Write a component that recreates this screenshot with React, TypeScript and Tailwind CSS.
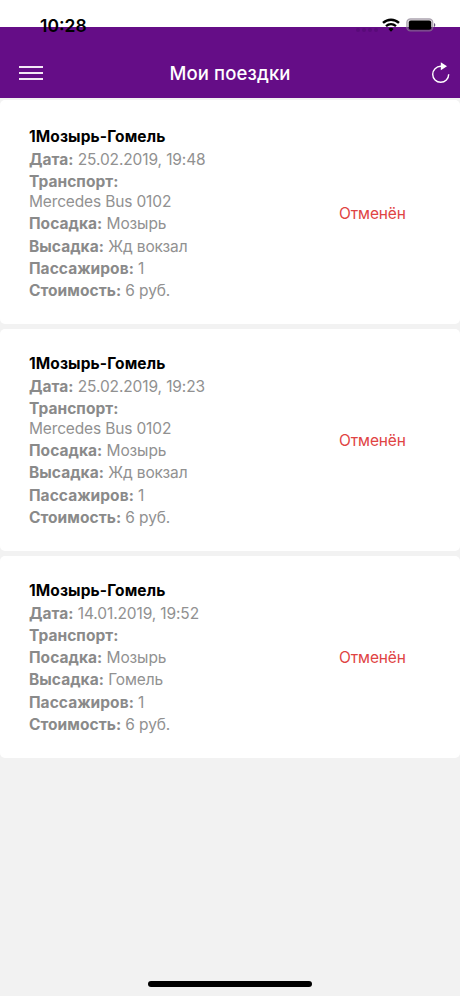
type Trip = {
  date: string;
  bus?: string;
  to: string;
};

const trips: Trip[] = [
  { date: '25.02.2019, 19:48', bus: 'Mercedes Bus 0102', to: 'Жд вокзал' },
  { date: '25.02.2019, 19:23', bus: 'Mercedes Bus 0102', to: 'Жд вокзал' },
  { date: '14.01.2019, 19:52', to: 'Гомель' },
];

function StatusBar() {
  return (
    <div className="absolute inset-x-0 top-0 z-10 h-[44px] text-black">
      <span className="absolute left-[40px] top-[15px] text-[17.5px] leading-[21px] font-semibold">10:28</span>
      <div className="absolute left-[356px] top-[28px] flex gap-[2px]">
        <i className="size-[4px] rounded-full bg-[#590b79]" />
        <i className="size-[4px] rounded-full bg-[#590b79]" />
        <i className="size-[4px] rounded-full bg-[#590b79]" />
        <i className="size-[4px] rounded-full bg-[#590b79]" />
      </div>
      <svg className="absolute left-[382px] top-[18px]" width="18" height="14" viewBox="0 0 18 14" fill="none" stroke="currentColor">
        <path d="M1 4.9C5.6.6 12.4.6 17 4.9" strokeWidth="2.4" />
        <path d="M4 8.2C7 5.5 11 5.5 14 8.2" strokeWidth="2.3" />
        <path d="M6.4 10.9C8 9.5 10 9.5 11.6 10.9L9 13.7Z" fill="currentColor" stroke="none" />
      </svg>
      <svg className="absolute left-[406px] top-[18px]" width="30" height="14" viewBox="0 0 30 14">
        <rect x="0.8" y="0.8" width="26" height="12.2" rx="3.6" fill="#8b8090" fillOpacity="0.35" stroke="#8b8090" strokeOpacity="0.65" strokeWidth="1.2" />
        <rect x="2.8" y="2.6" width="22.4" height="9.2" rx="2" fill="#000" />
        <path d="M28 5Q29.3 5.5 29.3 7T28 9Z" fill="#66507a" />
      </svg>
    </div>
  );
}

function Field({ label, children }: { label: string; children?: string }) {
  return (
    <p className="h-[22.2px] leading-[22.2px]">
      <b className="font-bold tracking-[0.04px] text-[#8a8a8a]">{label}:</b> {children}
    </p>
  );
}

function TripCard({ trip }: { trip: Trip }) {
  return (
    <article className="flex items-center rounded-[5px] bg-white pt-[23px] pb-[21.8px] pl-[29px] text-[15.5px] tracking-[-0.12px] text-[#919191] first:pt-[25px]">
      <div className="w-[310px]">
        <h2 className="h-[24px] leading-[24px] font-bold tracking-[0.1px] text-black">1Мозырь-Гомель</h2>
        <Field label="Дата">{trip.date}</Field>
        <Field label="Транспорт" />
        {trip.bus && <p className="h-[20px] leading-[18px] tracking-[-0.15px]">{trip.bus}</p>}
        <Field label="Посадка">Мозырь</Field>
        <Field label="Высадка">{trip.to}</Field>
        <Field label="Пассажиров">1</Field>
        <Field label="Стоимость">6 руб.</Field>
      </div>
      <span className="text-[#e04343]">Отменён</span>
    </article>
  );
}

export default function App() {
  return (
    <div className="relative flex h-[996px] w-[460px] flex-col overflow-hidden bg-[#f2f2f2] font-['Inter','Liberation_Sans',sans-serif]">
      <StatusBar />
      <div className="h-[27px] shrink-0 bg-white" />
      <header className="grid h-[71px] shrink-0 grid-cols-[1fr_auto_1fr] items-end bg-[#650d87] pb-[14px] text-white">
        <div className="mb-[4px] ml-[19px] flex w-[24px] flex-col gap-[4px]">
          <i className="h-[2px] bg-[#f3e8f6]" />
          <i className="h-[2px] bg-[#f3e8f6]" />
          <i className="h-[2px] bg-[#f3e8f6]" />
        </div>
        <h1 className="text-[18.5px] leading-[22px] font-medium tracking-[0.12px]">Мои поездки</h1>
        <svg className="mr-[9px] justify-self-end" width="20" height="22" viewBox="0 0 20 22" fill="none">
          <path d="M10.5 4.3H9.7A8 8 0 1 0 17.7 12.3" stroke="#fff" strokeWidth="1.4" />
          <path d="M9.8.3L16 4.3L9.8 8.2Z" fill="#fff" />
        </svg>
      </header>
      <main className="flex flex-col gap-[5px] pt-[2px]">
        {trips.map((trip) => (
          <TripCard key={trip.date} trip={trip} />
        ))}
      </main>
      <div className="absolute bottom-[9px] left-[148px] h-[6px] w-[164px] rounded-full bg-black" />
    </div>
  );
}
